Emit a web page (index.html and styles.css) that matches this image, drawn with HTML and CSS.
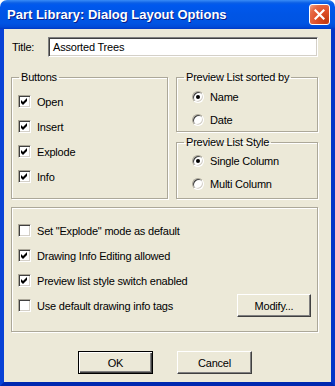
FILE: index.html
```
<!DOCTYPE html>
<html>
<head>
<meta charset="utf-8">
<link rel="stylesheet" href="styles.css">
</head>
<body>
<div class="window">
  <div class="titlebar">
    <span class="title">Part Library: Dialog Layout Options</span>
    <span class="close"><svg width="11" height="11" viewBox="0 0 11 11"><path d="M1.5 1.5 L9.5 9.5 M9.5 1.5 L1.5 9.5" stroke="#fff" stroke-width="2.2" stroke-linecap="square"/></svg></span>
  </div>
  <div class="client">
    <div class="title-row">
      <span class="label">Title:</span>
      <div class="textbox">Assorted Trees</div>
    </div>
    <div class="groups">
      <fieldset class="group g-buttons">
        <legend>Buttons</legend>
        <div class="group-body">
          <div class="opt check"><span class="box"><svg class="tick" width="7" height="7" viewBox="0 0 7 7"><path d="M0 2 L2 4 L6 0 L6 3 L2 7 L0 5 Z" fill="#000"/></svg></span>Open</div>
          <div class="opt check"><span class="box"><svg class="tick" width="7" height="7" viewBox="0 0 7 7"><path d="M0 2 L2 4 L6 0 L6 3 L2 7 L0 5 Z" fill="#000"/></svg></span>Insert</div>
          <div class="opt check"><span class="box"><svg class="tick" width="7" height="7" viewBox="0 0 7 7"><path d="M0 2 L2 4 L6 0 L6 3 L2 7 L0 5 Z" fill="#000"/></svg></span>Explode</div>
          <div class="opt check"><span class="box"><svg class="tick" width="7" height="7" viewBox="0 0 7 7"><path d="M0 2 L2 4 L6 0 L6 3 L2 7 L0 5 Z" fill="#000"/></svg></span>Info</div>
        </div>
      </fieldset>
      <div class="right-col">
        <fieldset class="group g-sort">
          <legend>Preview List sorted by</legend>
          <div class="group-body">
            <div class="opt radio on"><span class="dot"></span>Name</div>
            <div class="opt radio"><span class="dot"></span>Date</div>
          </div>
        </fieldset>
        <fieldset class="group g-style">
          <legend>Preview List Style</legend>
          <div class="group-body">
            <div class="opt radio on"><span class="dot"></span>Single Column</div>
            <div class="opt radio"><span class="dot"></span>Multi Column</div>
          </div>
        </fieldset>
      </div>
    </div>
    <fieldset class="group g-options">
      <div class="group-body">
        <div class="opt check"><span class="box"></span>Set "Explode" mode as default</div>
        <div class="opt check"><span class="box"><svg class="tick" width="7" height="7" viewBox="0 0 7 7"><path d="M0 2 L2 4 L6 0 L6 3 L2 7 L0 5 Z" fill="#000"/></svg></span>Drawing Info Editing allowed</div>
        <div class="opt check"><span class="box"><svg class="tick" width="7" height="7" viewBox="0 0 7 7"><path d="M0 2 L2 4 L6 0 L6 3 L2 7 L0 5 Z" fill="#000"/></svg></span>Preview list style switch enabled</div>
        <div class="opt-row">
          <div class="opt check"><span class="box"></span>Use default drawing info tags</div>
          <span class="btn modify">Modify...</span>
        </div>
      </div>
    </fieldset>
    <div class="actions">
      <span class="btn default">OK</span>
      <span class="btn">Cancel</span>
    </div>
  </div>
</div>
</body>
</html>
```
FILE: styles.css
```
* { box-sizing: border-box; }
html, body { margin: 0; padding: 0; background: #fff; }
body { width: 335px; height: 386px; overflow: hidden; font-family: "Liberation Sans", Arial, sans-serif; font-size: 11px; letter-spacing: -0.2px; color: #000; }

.window { width: 335px; height: 386px; display: flex; flex-direction: column; }

.titlebar {
  height: 29px; flex: none;
  display: flex; align-items: center; justify-content: space-between;
  padding: 0 5px 0 7px;
  border-radius: 7px 7px 0 0;
  background: linear-gradient(180deg, #3a8cf6 0, #0a5ee6 3px, #0058ee 5px, #0055e5 50%, #0054e3 80%, #004ad8 93%, #0038c4 100%);
}
.title {
  color: #fff; font-weight: bold; font-size: 13px; letter-spacing: 0;
  font-family: "Liberation Sans", Arial, sans-serif;
  text-shadow: 1px 1px 0 #0a1e8a;
}
.close {
  width: 21px; height: 21px;
  border: 1px solid #fff; border-radius: 3px;
  display: flex; align-items: center; justify-content: center;
  background: radial-gradient(circle at 85% 85%, #c23a10 0, #e0502a 45%, #e66a45 75%, #f3a88e 100%);
}

.client {
  flex: 1;
  background: #ece9d8;
  border-left: 4px solid #0842d6;
  border-right: 4px solid #0535c8;
  border-bottom: 4px solid #0028b0;
  padding: 8px 13px 0 7px;
  display: flex; flex-direction: column;
}

.title-row { display: flex; align-items: center; height: 20px; }
.label { width: 37px; padding-left: 1px; }
.textbox {
  flex: 1; height: 20px; background: #fff;
  border: 1px solid; border-color: #808080 #fff #fff #808080;
  box-shadow: inset 1px 1px 0 #404040, inset -1px -1px 0 #d4d0c8;
  padding: 2px 0 0 4px; line-height: 14px;
}

.group {
  margin: 0; padding: 0; min-width: 0;
  border: 1px solid #aca899;
  box-shadow: inset 1px 1px 0 #fff, 1px 1px 0 #fff;
}
.group legend { padding: 0 2px; margin-left: 7px; line-height: 14px; }

.groups { display: flex; gap: 8px; margin-top: 13px; }
.g-buttons { width: 157px; height: 129px; }
.g-buttons .group-body { padding: 5px 0 0 6px; }
.right-col { flex: 1; display: flex; flex-direction: column; gap: 3px; }
.g-sort { height: 62px; }
.g-sort .group-body { padding: 1px 0 0 15px; }
.g-style { height: 64px; }
.g-style .group-body { padding: 0 0 0 15px; }

.opt { display: flex; align-items: center; gap: 6px; height: 25px; white-space: nowrap; }
.radio { height: 23px; }

.box {
  width: 13px; height: 13px; flex: none; background: #fff;
  border: 1px solid; border-color: #aca899 #fff #fff #aca899;
  box-shadow: inset 1px 1px 0 #404040, inset -1px -1px 0 #d4d0c8;
  display: flex; align-items: center; justify-content: center;
}
.tick { display: block; }
.dot {
  width: 12px; height: 12px; flex: none; border-radius: 50%;
  background: #fff;
  border: 1px solid; border-color: #aca899 #fff #fff #aca899;
  box-shadow: inset 1px 1px 0 #404040, inset -1px -1px 0 #d4d0c8;
  position: relative;
}
.radio.on .dot::after {
  content: ""; position: absolute; left: 3px; top: 3px;
  width: 4px; height: 4px; border-radius: 50%; background: #000;
}

.g-options { margin-top: 8px; height: 125px; }
.g-options .group-body { padding: 10px 6px 0 6px; }
.opt-row { display: flex; align-items: center; justify-content: space-between; }

.btn {
  display: inline-flex; align-items: center; justify-content: center;
  width: 75px; height: 23px; background: #ece9d8;
  border: 1px solid; border-color: #fff #404040 #404040 #fff;
  box-shadow: inset -1px -1px 0 #808080;
}
.modify { width: 74px; }
.btn.default {
  border: 1px solid #000;
  box-shadow: inset 1px 1px 0 #fff, inset -1px -1px 0 #404040, inset -2px -2px 0 #808080;
}

.actions { display: flex; justify-content: center; gap: 24px; margin-top: 19px; padding-left: 1px; }
```
